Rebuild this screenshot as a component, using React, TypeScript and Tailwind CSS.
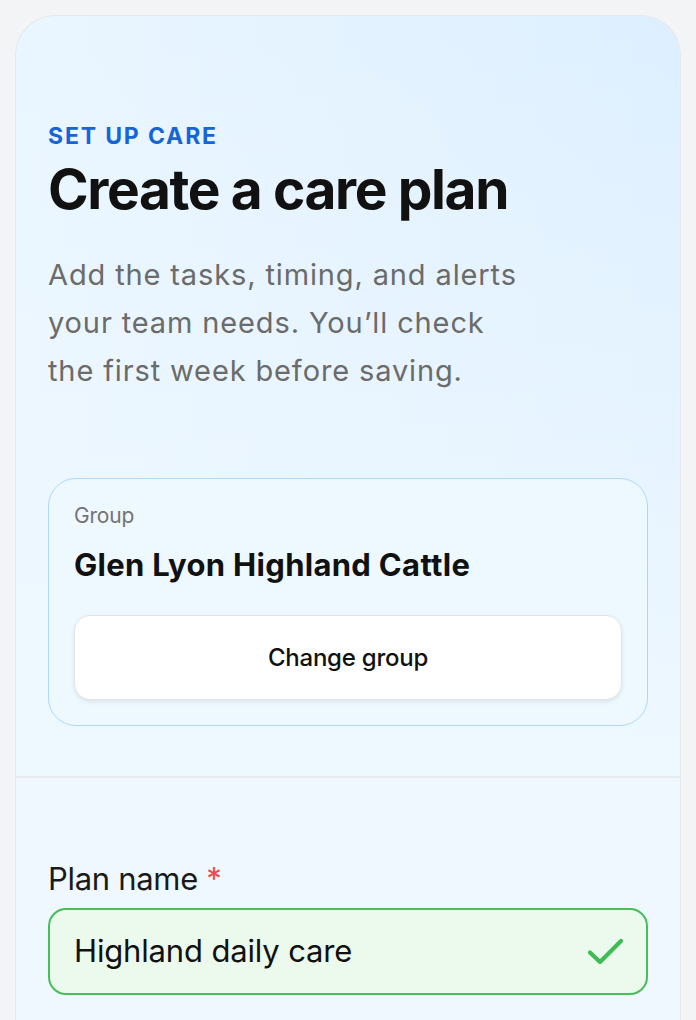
import React from "react";

// Care plan setup screen: header, selected group card, plan name field.

function CheckIcon() {
  return (
    <svg width="40" height="30" viewBox="0 0 40 30" fill="none" aria-hidden>
      <path
        d="M4 15.5 L14 25 L35 4"
        stroke="#3fbd55"
        strokeWidth="4.2"
        strokeLinecap="round"
        strokeLinejoin="round"
      />
    </svg>
  );
}

export default function App() {
  return (
    <div
      className="min-h-[1020px] bg-[#f3f4f6] px-[15px] pt-[15px] overflow-hidden"
      style={{ fontFamily: "Inter, 'Noto Sans', sans-serif" }}
    >
      <div className="rounded-t-[40px] border border-b-0 border-[#e6e8eb] bg-gradient-to-r from-[#eaf6ff] to-[#ddefff] overflow-hidden">
        {/* header */}
        <div className="px-[32px] pt-[106px] pb-[50px] bg-gradient-to-b from-transparent to-[#eef8ff]">
          <div className="text-[23px] leading-[28px] font-bold tracking-[0.08em] text-[#1565d8]">
            SET UP CARE
          </div>
          <h1 className="mt-[12px] text-[55px] leading-[55px] font-bold tracking-[-0.025em] text-[#111111]">
            Create a care plan
          </h1>
          <p className="mt-[34px] max-w-[478px] text-[29px] leading-[48px] tracking-[0.03em] text-[#6b6b6b]">
            Add the tasks, timing, and alerts your team needs. You’ll check the first week before saving.
          </p>

          <div className="mt-[83px] rounded-[28px] border-[1.5px] border-[#aed8f8] bg-[#eef8ff] p-[25px]">
            <div className="text-[21px] leading-[24px] text-[#737373] tracking-[-0.01em]">Group</div>
            <div className="mt-[20px] text-[31px] leading-[34px] font-bold tracking-[0.01em] text-[#111111]">
              Glen Lyon Highland Cattle
            </div>
            <button className="mt-[33px] flex h-[85px] w-full items-center justify-center rounded-[16px] border border-[#e2e4e7] bg-white text-[24px] font-medium tracking-[-0.01em] text-[#111111] shadow-[0_2px_4px_rgba(0,0,0,0.08)]">
              Change group
            </button>
          </div>
        </div>

        {/* form */}
        <div className="border-t-2 border-[#e7ebef] bg-[#eff7ff] px-[32px] pt-[83px] pb-[120px]">
          <label className="block text-[31px] leading-[36px] tracking-[-0.01em] text-[#1a1a1a]">
            Plan name <span className="text-[#f04b4b]">*</span>
          </label>
          <div className="mt-[11px] flex h-[87px] items-center justify-between rounded-[18px] border-2 border-[#46be5a] bg-[#ebfaec] pl-[24px] pr-[20px]">
            <span className="text-[31px] tracking-[-0.005em] text-[#111111]">Highland daily care</span>
            <CheckIcon />
          </div>
        </div>
      </div>
    </div>
  );
}
